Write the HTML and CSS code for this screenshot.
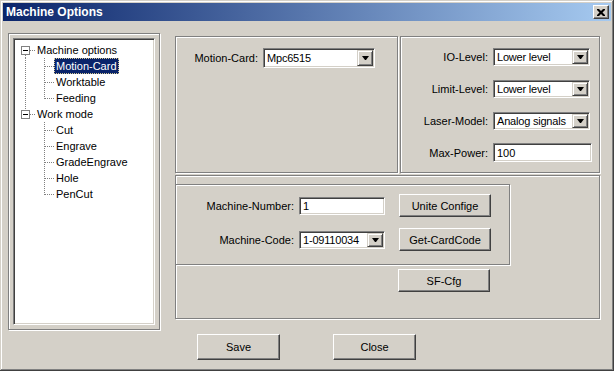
FILE: index.html
```html
<!DOCTYPE html>
<html lang="en">
<head>
    <meta charset="UTF-8">
    <title>Machine Options</title>
    <link rel="stylesheet" href="styles.css">
</head>
<body>
    <div class="window">
        <div class="titlebar">
            <span class="title">Machine Options</span>
            <button class="title-close" type="button">
                <svg width="8" height="7" viewBox="0 0 8 7"><path d="M0 0h2l2 2 2-2h2v1l-2.5 2.5 2.5 2.5v1h-2l-2-2-2 2h-2v-1l2.5-2.5-2.5-2.5z" fill="#000"/></svg>
            </button>
        </div>

        <div class="dialog-body">
            <!-- Options tree -->
            <div class="tree-frame">
                <div class="tree">
                    <div class="node">
                        <svg width="20" height="16"><rect x="6.5" y="4.5" width="8" height="8" fill="#fff" stroke="#808080"/><path d="M8 8.5h5" stroke="#000"/><path d="M15 8.5h5M10.5 13v3" stroke="#808080" stroke-dasharray="1 1"/></svg>
                        <span class="node-label">Machine options</span>
                    </div>
                    <div class="node">
                        <svg width="39" height="16"><path d="M10.5 0v16M29.5 0v16M30 8.5h9" stroke="#808080" stroke-dasharray="1 1"/></svg>
                        <span class="node-label selected">Motion-Card</span>
                    </div>
                    <div class="node">
                        <svg width="39" height="16"><path d="M10.5 0v16M29.5 0v16M30 8.5h9" stroke="#808080" stroke-dasharray="1 1"/></svg>
                        <span class="node-label">Worktable</span>
                    </div>
                    <div class="node">
                        <svg width="39" height="16"><path d="M10.5 0v16M29.5 0v9M30 8.5h9" stroke="#808080" stroke-dasharray="1 1"/></svg>
                        <span class="node-label">Feeding</span>
                    </div>
                    <div class="node">
                        <svg width="20" height="16"><rect x="6.5" y="4.5" width="8" height="8" fill="#fff" stroke="#808080"/><path d="M8 8.5h5" stroke="#000"/><path d="M15 8.5h5M10.5 0v4" stroke="#808080" stroke-dasharray="1 1"/></svg>
                        <span class="node-label">Work mode</span>
                    </div>
                    <div class="node">
                        <svg width="39" height="16"><path d="M29.5 0v16M30 8.5h9" stroke="#808080" stroke-dasharray="1 1"/></svg>
                        <span class="node-label">Cut</span>
                    </div>
                    <div class="node">
                        <svg width="39" height="16"><path d="M29.5 0v16M30 8.5h9" stroke="#808080" stroke-dasharray="1 1"/></svg>
                        <span class="node-label">Engrave</span>
                    </div>
                    <div class="node">
                        <svg width="39" height="16"><path d="M29.5 0v16M30 8.5h9" stroke="#808080" stroke-dasharray="1 1"/></svg>
                        <span class="node-label">GradeEngrave</span>
                    </div>
                    <div class="node">
                        <svg width="39" height="16"><path d="M29.5 0v16M30 8.5h9" stroke="#808080" stroke-dasharray="1 1"/></svg>
                        <span class="node-label">Hole</span>
                    </div>
                    <div class="node">
                        <svg width="39" height="16"><path d="M29.5 0v9M30 8.5h9" stroke="#808080" stroke-dasharray="1 1"/></svg>
                        <span class="node-label">PenCut</span>
                    </div>
                </div>
            </div>

            <!-- Settings panels -->
            <div class="settings">
                <div class="top-panels">
                    <div class="panel panel-card">
                        <div class="field-row">
                            <label class="field-label">Motion-Card:</label>
                            <div class="combo combo-card"><span class="combo-value">Mpc6515</span><span class="combo-arrow"></span></div>
                        </div>
                    </div>
                    <div class="panel panel-levels">
                        <div class="field-row">
                            <label class="field-label">IO-Level:</label>
                            <div class="combo combo-level"><span class="combo-value">Lower level</span><span class="combo-arrow"></span></div>
                        </div>
                        <div class="field-row">
                            <label class="field-label">Limit-Level:</label>
                            <div class="combo combo-level"><span class="combo-value">Lower level</span><span class="combo-arrow"></span></div>
                        </div>
                        <div class="field-row">
                            <label class="field-label">Laser-Model:</label>
                            <div class="combo combo-level"><span class="combo-value">Analog signals</span><span class="combo-arrow"></span></div>
                        </div>
                        <div class="field-row">
                            <label class="field-label">Max-Power:</label>
                            <div class="edit edit-power">100</div>
                        </div>
                    </div>
                </div>

                <div class="panel panel-bottom">
                    <div class="panel panel-machine">
                        <div class="field-row">
                            <label class="field-label">Machine-Number:</label>
                            <div class="edit edit-number">1</div>
                            <button class="btn btn-side" type="button">Unite Confige</button>
                        </div>
                        <div class="field-row">
                            <label class="field-label">Machine-Code:</label>
                            <div class="combo combo-code"><span class="combo-value">1-09110034</span><span class="combo-arrow"></span></div>
                            <button class="btn btn-side" type="button">Get-CardCode</button>
                        </div>
                    </div>
                    <div class="sf-row">
                        <button class="btn btn-side" type="button">SF-Cfg</button>
                    </div>
                </div>
            </div>
        </div>

        <div class="actions">
            <button class="btn btn-action" type="button">Save</button>
            <button class="btn btn-action" type="button">Close</button>
        </div>
    </div>
</body>
</html>
```

FILE: styles.css
```css
/* Base */
* {
    box-sizing: border-box;
}

body {
    margin: 0;
    font-family: "Liberation Sans", Arial, sans-serif;
    font-size: 11px;
    color: #000;
    background: #d4d0c8;
}

/* Window frame */
.window {
    width: 614px;
    height: 371px;
    padding: 3px;
    background: #d4d0c8;
    box-shadow: inset -1px -1px 0 #404040, inset 1px 1px 0 #d4d0c8,
                inset -2px -2px 0 #808080, inset 2px 2px 0 #fff;
}

.titlebar {
    display: flex;
    align-items: center;
    justify-content: space-between;
    height: 18px;
    padding: 0 2px 0 3px;
    background: linear-gradient(to right, #0a246a, #a6caf0);
}

.title {
    color: #fff;
    font-weight: bold;
    font-size: 12px;
}

.title-close {
    display: flex;
    align-items: center;
    justify-content: center;
    width: 16px;
    height: 14px;
    padding: 0;
    background: #d4d0c8;
    border: 1px solid;
    border-color: #fff #404040 #404040 #fff;
    box-shadow: inset -1px -1px 0 #808080;
}

/* Layout */
.dialog-body {
    display: flex;
    gap: 15px;
    margin-top: 12px;
    padding-left: 5px;
}

/* Etched group frame */
.panel {
    border: 1px solid #808080;
    box-shadow: inset 1px 1px 0 #fff, 1px 1px 0 #fff;
}

/* Tree */
.tree-frame {
    width: 152px;
    height: 297px;
    padding: 4px;
    border: 1px solid #808080;
    box-shadow: inset 1px 1px 0 #fff, 1px 1px 0 #fff;
}

.tree {
    height: 100%;
    padding-top: 3px;
    background: #fff;
    border: 1px solid;
    border-color: #808080 #fff #fff #808080;
    box-shadow: inset 1px 1px 0 #404040, inset -1px -1px 0 #d4d0c8;
}

.node {
    display: flex;
    align-items: center;
    height: 16px;
    padding-left: 1px;
}

.node svg {
    display: block;
    shape-rendering: crispEdges;
}

.node-label {
    padding: 0 1px;
    line-height: 14px;
    border: 1px solid transparent;
    white-space: nowrap;
}

.node-label.selected {
    background: #0a246a;
    color: #fff;
    border: 1px dotted #d4c894;
}

/* Settings side */
.settings {
    width: 425px;
    margin-top: 3px;
}

.top-panels {
    display: flex;
    gap: 2px;
}

.panel-card {
    width: 223px;
    height: 137px;
    padding-top: 11px;
}

.panel-card .field-label {
    width: 87px;
}

.panel-levels {
    width: 200px;
    height: 137px;
    padding-top: 10px;
    display: flex;
    flex-direction: column;
    gap: 13px;
}

.panel-levels .field-label {
    width: 92px;
}

.panel-bottom {
    height: 144px;
    margin-top: 2px;
}

.panel-machine {
    width: 335px;
    height: 81px;
    margin: 8px 0 0 -1px;
    padding-top: 9px;
    display: flex;
    flex-direction: column;
    gap: 11px;
}

.panel-machine .field-label {
    width: 123px;
}

.sf-row {
    margin-top: 4px;
    padding-left: 222px;
}

/* Fields */
.field-row {
    display: flex;
    align-items: center;
    height: 19px;
}

.panel-machine .field-row {
    height: 23px;
}

.field-label {
    flex: none;
    padding-right: 5px;
    text-align: right;
    white-space: nowrap;
}

.edit,
.combo {
    display: flex;
    align-items: center;
    background: #fff;
    border: 1px solid;
    border-color: #808080 #fff #fff #808080;
    box-shadow: inset 1px 1px 0 #404040, inset -1px -1px 0 #d4d0c8;
}

.edit {
    height: 19px;
    padding-left: 3px;
}

.combo {
    height: 19px;
    padding: 1px;
}

.combo-value {
    flex: 1;
    padding-left: 2px;
    letter-spacing: -0.2px;
    white-space: nowrap;
    overflow: hidden;
}

.combo-arrow {
    display: flex;
    align-items: center;
    justify-content: center;
    width: 16px;
    height: 100%;
    background: #d4d0c8;
    border: 1px solid;
    border-color: #d4d0c8 #404040 #404040 #d4d0c8;
    box-shadow: inset 1px 1px 0 #fff, inset -1px -1px 0 #808080;
}

.combo-arrow::after {
    content: "";
    width: 1px;
    border-top: 4px solid #000;
    border-left: 3px solid transparent;
    border-right: 3px solid transparent;
}

.combo-card {
    width: 112px;
    height: 20px;
}

.combo-level {
    width: 97px;
    height: 18px;
}

.edit-power {
    width: 99px;
}

.edit-number {
    width: 86px;
    height: 18px;
}

.combo-code {
    width: 86px;
    height: 18px;
}

/* Buttons */
.btn {
    font-family: "Liberation Sans", Arial, sans-serif;
    font-size: 11px;
    color: #000;
    background: #d4d0c8;
    border: 1px solid;
    border-color: #fff #404040 #404040 #fff;
    box-shadow: inset -1px -1px 0 #808080;
    padding: 0;
}

.btn-side {
    width: 92px;
    height: 23px;
    margin-left: 14px;
}

.sf-row .btn-side {
    margin-left: 0;
}

.actions {
    display: flex;
    gap: 53px;
    margin-top: 4px;
    padding-left: 194px;
}

.btn-action {
    width: 83px;
    height: 26px;
}
```
